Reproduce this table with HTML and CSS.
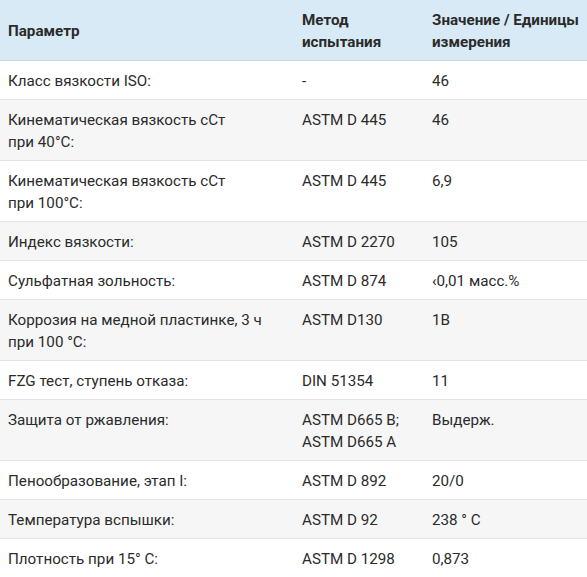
FILE: index.html
```html
<!DOCTYPE html>
<html lang="ru">
<head>
<meta charset="utf-8">
<link rel="stylesheet" href="styles.css">
</head>
<body>
<table class="spec">
  <colgroup>
    <col class="c1"><col class="c2"><col class="c3">
  </colgroup>
  <thead>
    <tr><th>Параметр</th><th>Метод<br>испытания</th><th>Значение / Единицы<br>измерения</th></tr>
  </thead>
  <tbody>
    <tr><td>Класс вязкости ISO:</td><td>-</td><td>46</td></tr>
    <tr><td>Кинематическая вязкость сСт<br>при 40°C:</td><td>ASTM D 445</td><td>46</td></tr>
    <tr><td>Кинематическая вязкость сСт<br>при 100°C:</td><td>ASTM D 445</td><td>6,9</td></tr>
    <tr><td>Индекс вязкости:</td><td>ASTM D 2270</td><td>105</td></tr>
    <tr><td>Сульфатная зольность:</td><td>ASTM D 874</td><td>‹0,01 масс.%</td></tr>
    <tr><td>Коррозия на медной пластинке, 3 ч<br>при 100 °C:</td><td>ASTM D130</td><td>1B</td></tr>
    <tr><td>FZG тест, ступень отказа:</td><td>DIN 51354</td><td>11</td></tr>
    <tr><td>Защита от ржавления:</td><td>ASTM D665 B;<br>ASTM D665 A</td><td>Выдерж.</td></tr>
    <tr><td>Пенообразование, этап I:</td><td>ASTM D 892</td><td>20/0</td></tr>
    <tr><td>Температура вспышки:</td><td>ASTM D 92</td><td>238 ° C</td></tr>
    <tr><td>Плотность при 15° C:</td><td>ASTM D 1298</td><td>0,873</td></tr>
  </tbody>
</table>
</body>
</html>
```
FILE: styles.css
```css
html, body {
  margin: 0;
  padding: 0;
  background: #ffffff;
}
.spec {
  width: 587px;
  border-collapse: collapse;
  table-layout: fixed;
  font-family: Roboto, "Liberation Sans", sans-serif;
  font-size: 15.2px;
  line-height: 22px;
  color: #2b2b2b;
}
.c1 { width: 294px; }
.c2 { width: 130px; }
.c3 { width: 163px; }
.spec th, .spec td {
  text-align: left;
  vertical-align: top;
  padding: 9px 8px 7px 8px;
  border-bottom: 1px solid #e3e3e3;
}
.spec th {
  background: #d8eaf5;
  font-weight: 700;
  border-bottom-color: #c9d6df;
}
.spec thead tr th:first-child {
  vertical-align: middle;
}
.spec tbody tr:nth-child(even) td {
  background: #f6f6f6;
}
.spec tbody tr:last-child td {
  border-bottom: none;
}
```
